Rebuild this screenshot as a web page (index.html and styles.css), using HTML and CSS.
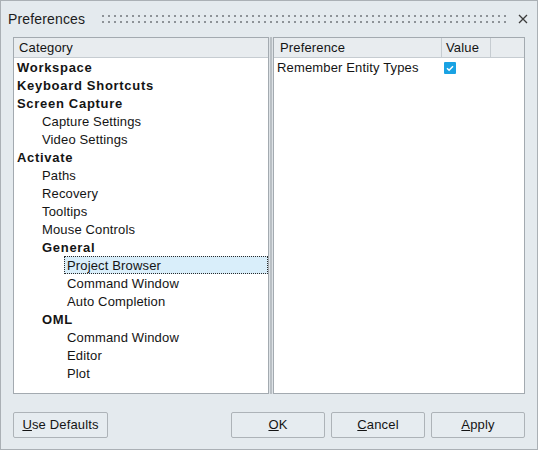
FILE: index.html
```html
<!DOCTYPE html>
<html>
<head>
<meta charset="utf-8">
<title>Preferences</title>
<link rel="stylesheet" href="styles.css">
</head>
<body>
<div class="window">
  <div class="titlebar">
    <span class="title">Preferences</span>
    <span class="grip"></span>
    <span class="close"><svg width="10" height="10" viewBox="0 0 10 10"><path d="M1 1L9 9M9 1L1 9" stroke="#3c3c3c" stroke-width="1.3" fill="none"/></svg></span>
  </div>
  <div class="panes">
    <div class="pane left">
      <div class="header"><div class="hcell cat">Category</div></div>
      <ul class="tree">
        <li class="l0 bold"><span>Workspace</span></li>
        <li class="l0 bold"><span>Keyboard Shortcuts</span></li>
        <li class="l0 bold"><span>Screen Capture</span></li>
        <li class="l1"><span>Capture Settings</span></li>
        <li class="l1"><span>Video Settings</span></li>
        <li class="l0 bold"><span>Activate</span></li>
        <li class="l1"><span>Paths</span></li>
        <li class="l1"><span>Recovery</span></li>
        <li class="l1"><span>Tooltips</span></li>
        <li class="l1"><span>Mouse Controls</span></li>
        <li class="l1 bold"><span>General</span></li>
        <li class="l2 selected"><span>Project Browser</span></li>
        <li class="l2"><span>Command Window</span></li>
        <li class="l2"><span>Auto Completion</span></li>
        <li class="l1 bold"><span>OML</span></li>
        <li class="l2"><span>Command Window</span></li>
        <li class="l2"><span>Editor</span></li>
        <li class="l2"><span>Plot</span></li>
      </ul>
    </div>
    <div class="splitter"></div>
    <div class="pane right">
      <div class="header">
        <div class="hcell pref">Preference</div>
        <div class="hcell val">Value</div>
        <div class="hcell rest"></div>
      </div>
      <div class="row">
        <div class="cell pref">Remember Entity Types</div>
        <div class="cell val"><span class="check"><svg width="12" height="12" viewBox="0 0 12 12"><path d="M3 6.2L5.1 8.2L9 4.2" stroke="#ffffff" stroke-width="1.5" fill="none"/></svg></span></div>
      </div>
    </div>
  </div>
  <div class="buttons">
    <button class="btn wide"><u>U</u>se Defaults</button>
    <div class="spacer"></div>
    <button class="btn"><u>O</u>K</button>
    <button class="btn"><u>C</u>ancel</button>
    <button class="btn"><u>A</u>pply</button>
  </div>
</div>
</body>
</html>
```
FILE: styles.css
```css
html, body {
  margin: 0;
  padding: 0;
  background: #e4eaee;
}
body {
  font-family: "Liberation Sans", Arial, sans-serif;
  font-size: 13px;
  color: #141414;
  letter-spacing: 0.15px;
}
.window {
  width: 538px;
  height: 450px;
  box-sizing: border-box;
  border: 1px solid #aab0b5;
  background: #e4eaee;
  padding: 0 12px;
  display: flex;
  flex-direction: column;
}
.titlebar {
  height: 36px;
  margin: 0 -12px;
  padding: 0 9px 0 7px;
  display: flex;
  align-items: center;
}
.title {
  font-size: 14px;
  color: #1c1c1c;
}
.grip {
  margin-left: auto;
  width: 404px;
  height: 8px;
  background: linear-gradient(90deg, #8d9297 2px, transparent 2px) 0 0 / 6px 6px;
  -webkit-mask: linear-gradient(#000 2px, transparent 2px) 0 0 / 6px 6px;
  mask: linear-gradient(#000 2px, transparent 2px) 0 0 / 6px 6px;
}
.close {
  margin-left: 12px;
  width: 10px;
  height: 10px;
  display: flex;
}
.panes {
  height: 357px;
  display: flex;
}
.pane {
  box-sizing: border-box;
  border: 1px solid #a3aab0;
  background: #ffffff;
}
.pane.left {
  width: 256px;
}
.pane.right {
  flex: 1;
}
.splitter {
  width: 4px;
  background: linear-gradient(90deg, #dde2e6 1px, #b9bfc4 1px, #b9bfc4 3px, #dde2e6 3px);
}
.header {
  height: 19px;
  border-bottom: 1px solid #c6ccd1;
  background: #e8ecef;
  display: flex;
}
.hcell {
  line-height: 19px;
  box-sizing: border-box;
}
.hcell.cat {
  padding-left: 5px;
}
.hcell.pref {
  width: 168px;
  padding-left: 6px;
  border-right: 1px solid #c6ccd1;
}
.hcell.val {
  width: 49px;
  padding-left: 4px;
  border-right: 1px solid #c6ccd1;
}
.hcell.rest {
  flex: 1;
}
.tree {
  list-style: none;
  margin: 0;
  padding: 0;
}
.tree li {
  height: 18px;
  white-space: nowrap;
}
.tree li span {
  display: block;
  height: 18px;
  box-sizing: border-box;
  padding-left: 3px;
  padding-top: 1px;
  line-height: 18px;
}
.tree li.l0 { padding-left: 0; }
.tree li.l1 { padding-left: 25px; }
.tree li.l2 { padding-left: 50px; }
.tree li.bold {
  font-weight: bold;
  letter-spacing: 0.7px;
}
.tree li.selected span {
  background: #d9eefa;
  border: 1px dotted #2a2a2a;
  padding-left: 2px;
  padding-top: 0;
  line-height: 18px;
}
.row {
  height: 18px;
  display: flex;
}
.cell {
  box-sizing: border-box;
}
.cell.pref {
  width: 168px;
  padding-left: 3px;
  padding-top: 1px;
  line-height: 18px;
  white-space: nowrap;
}
.cell.val {
  width: 49px;
  padding-left: 2px;
  padding-top: 4px;
}
.check {
  display: block;
  width: 12px;
  height: 12px;
  background: #19a2e3;
  border-radius: 1px;
}
.check svg {
  display: block;
}
.buttons {
  margin-top: 18px;
  height: 26px;
  display: flex;
  gap: 6px;
}
.spacer {
  flex: 1;
}
.btn {
  width: 94px;
  height: 26px;
  box-sizing: border-box;
  border: 1px solid #adb3b8;
  border-radius: 2px;
  background: #e6ecf0;
  font-family: "Liberation Sans", Arial, sans-serif;
  font-size: 13px;
  letter-spacing: 0.15px;
  color: #141414;
  padding: 0 0 2px 0;
}
.btn.wide {
  width: 95px;
}
.btn u {
  text-decoration: underline;
}
```
